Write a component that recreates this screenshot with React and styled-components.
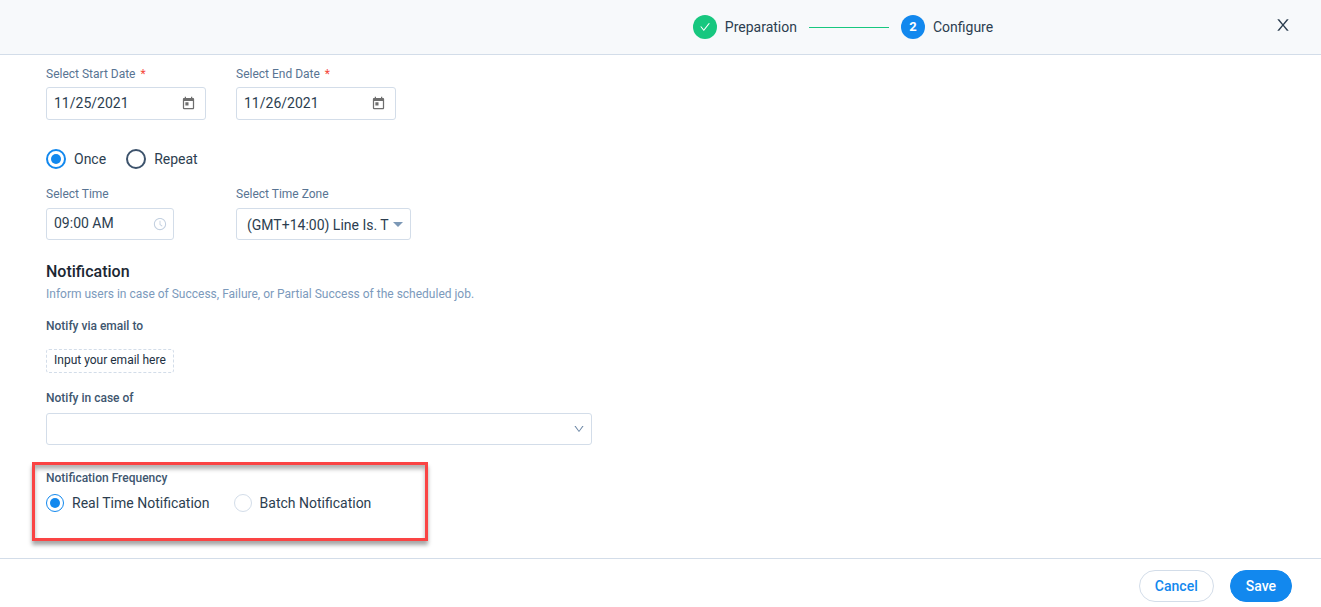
import { useState } from "react";
import styled, { createGlobalStyle } from "styled-components";
import {
  AiOutlineCheck,
  AiOutlineClockCircle,
  AiOutlineDown,
} from "react-icons/ai";
import { MdToday } from "react-icons/md";

const GlobalStyle = createGlobalStyle`
  * {
    box-sizing: border-box;
  }

  body {
    margin: 0;
    background: #ffffff;
    color: #2c3e50;
    font-family: Roboto, "Liberation Sans", sans-serif;
    font-size: 14px;
    line-height: 20px;
  }

  input, select, button {
    font: inherit;
    color: inherit;
  }
`;

const Page = styled.div`
  display: flex;
  flex-direction: column;
  min-height: 100vh;
`;

const Header = styled.header`
  display: flex;
  align-items: center;
  padding: 11px 22px 11px 419px;
  background: #f7f9fb;
  border-bottom: 1px solid #d3dde9;
`;

const Steps = styled.ol`
  flex: 1;
  display: flex;
  justify-content: center;
  align-items: center;
  gap: 12px;
  margin: 0;
  padding: 0;
  list-style: none;
`;

const Step = styled.li`
  display: flex;
  align-items: center;
  gap: 8px;

  & + &::before {
    content: "";
    width: 80px;
    height: 1px;
    margin-right: 4px;
    background: #17c77f;
  }
`;

const StepBadge = styled.span`
  display: flex;
  align-items: center;
  justify-content: center;
  width: 24px;
  height: 24px;
  border-radius: 50%;
  background: ${(props) => (props.$done ? "#17c77f" : "#1288ee")};
  color: white;
  font-size: 13px;
  font-weight: 700;
`;

const CloseButton = styled.button`
  display: flex;
  align-items: center;
  justify-content: center;
  width: 32px;
  height: 28px;
  margin-bottom: 4px;
  padding: 0;
  border: none;
  background: none;
`;

const Content = styled.main`
  flex: 1;
  padding: 11px 46px 17px;
`;

const FieldRow = styled.div`
  display: grid;
  grid-template-columns: 160px 175px;
  column-gap: 30px;
`;

const Label = styled.label`
  display: block;
  margin-bottom: ${(props) => props.$gap || "6px"};
  font-size: 12px;
  line-height: 16px;
  font-weight: ${(props) => (props.$strong ? 500 : 400)};
  color: ${(props) => (props.$strong ? "#40566f" : "#587493")};
`;

const Required = styled.span`
  margin-left: 2px;
  color: #f5483b;
`;

const Control = styled.div`
  position: relative;
  max-width: ${(props) => props.$width || "100%"};
`;

const ControlIcon = styled.span`
  position: absolute;
  top: 0;
  bottom: 0;
  right: ${(props) => props.$right || "7px"};
  display: flex;
  align-items: center;
  color: ${(props) => props.$color || "#6b86a5"};
  font-size: ${(props) => props.$size || "14px"};
  pointer-events: none;
`;

const TextInput = styled.input`
  display: block;
  width: 100%;
  height: 32px;
  padding: 0 28px 2px 7px;
  border: 1px solid #d3dde9;
  border-radius: 3px;
  background: white;
`;

const DateInput = styled(TextInput)`
  height: 33px;
`;

const Select = styled.select`
  display: block;
  width: 100%;
  height: 32px;
  padding: 1px 20px 0 10px;
  border: 1px solid #d3dde9;
  border-radius: 3px;
  background: white;
  appearance: none;
`;

const EmailInput = styled.input`
  display: block;
  width: 128px;
  height: 24px;
  margin: 15px 0 17px;
  padding: 0 7px 2px;
  border: 1px dashed #d3dde9;
  border-radius: 3px;
  font-size: 12px;

  &::placeholder {
    color: #22303f;
    opacity: 1;
  }
`;

const RadioGroup = styled.div`
  display: flex;
  gap: ${(props) => props.$gap};
  margin: ${(props) => props.$margin};
`;

const RadioLabel = styled.label`
  display: flex;
  align-items: center;
  gap: 8px;
`;

const Radio = styled.input`
  display: grid;
  place-content: center;
  width: 20px;
  height: 20px;
  margin: 0;
  border: 2px solid #3d536c;
  border-radius: 50%;
  background: white;
  appearance: none;

  &:checked {
    border-color: #1288ee;
  }

  &:checked::before {
    content: "";
    width: 10px;
    height: 10px;
    border-radius: 50%;
    background: #1288ee;
  }
`;

const SmallRadio = styled(Radio)`
  width: 18px;
  height: 18px;
  border: 1px solid #d3dde9;
`;

const SectionTitle = styled.h2`
  margin: 22px 0 4px;
  color: #1b2733;
  font-size: 16px;
  font-weight: 500;
  line-height: 20px;
`;

const Hint = styled.p`
  margin: 0 0 16px;
  color: #7c9abc;
  font-size: 12px;
  line-height: 16px;
`;

const Highlight = styled.section`
  max-width: 396px;
  margin: 17px 0 0 -14px;
  padding: 5px 11px 25px;
  border: 3px solid #fa4444;
  box-shadow: 0 4px 4px rgba(0, 0, 0, 0.35), inset 0 4px 4px rgba(0, 0, 0, 0.3);
`;

const GroupTitle = styled.h3`
  margin: 0 0 7px;
  color: #40566f;
  font-size: 12px;
  font-weight: 500;
  line-height: 16px;
`;

const Footer = styled.footer`
  display: flex;
  justify-content: flex-end;
  gap: 16px;
  padding: 11px 29px 5px;
  border-top: 1px solid #d3dde9;
`;

const Button = styled.button`
  height: 32px;
  padding: 0 15px;
  border: 1px solid ${(props) => (props.$primary ? "#1288ee" : "#d3dde9")};
  border-radius: 16px;
  background: ${(props) => (props.$primary ? "#1288ee" : "white")};
  color: ${(props) => (props.$primary ? "white" : "#1288ee")};
  font-weight: 500;
`;

function CloseIcon() {
  return (
    <svg width="18" height="18" viewBox="0 0 1024 1024" fill="currentColor">
      <path d="M563.8 512l262.5-312.9c4.4-5.2.7-13.1-6.1-13.1h-79.8c-4.7 0-9.2 2.1-12.3 5.7L511.6 449.8 295.1 191.7c-3-3.6-7.5-5.7-12.3-5.7H203c-6.8 0-10.5 7.9-6.1 13.1L459.4 512 196.9 824.9A7.95 7.95 0 0 0 203 838h79.8c4.7 0 9.2-2.1 12.3-5.7l216.5-258.1 216.5 258.1c3 3.6 7.5 5.7 12.3 5.7h79.8c6.8 0 10.5-7.9 6.1-13.1L563.8 512z" />
    </svg>
  );
}

function DateField({ id, label, value }) {
  return (
    <div>
      <Label htmlFor={id} $gap="5px">
        {label} <Required>*</Required>
      </Label>
      <Control $width="160px">
        <DateInput id={id} defaultValue={value} />
        <ControlIcon $right="10px" $color="#6e6e6e" $size="15px">
          <MdToday />
        </ControlIcon>
      </Control>
    </div>
  );
}

export default function App() {
  const [schedule, setSchedule] = useState("once");
  const [frequency, setFrequency] = useState("realtime");

  return (
    <Page>
      <GlobalStyle />
      <Header>
        <Steps>
          <Step>
            <StepBadge $done>
              <AiOutlineCheck size={12} />
            </StepBadge>
            Preparation
          </Step>
          <Step>
            <StepBadge>2</StepBadge>
            Configure
          </Step>
        </Steps>
        <CloseButton type="button" aria-label="Close">
          <CloseIcon />
        </CloseButton>
      </Header>

      <Content>
        <FieldRow>
          <DateField id="start-date" label="Select Start Date" value="11/25/2021" />
          <DateField id="end-date" label="Select End Date" value="11/26/2021" />
        </FieldRow>

        <RadioGroup $gap="20px" $margin="29px 0 17px">
          <RadioLabel>
            <Radio
              type="radio"
              name="schedule"
              checked={schedule === "once"}
              onChange={() => setSchedule("once")}
            />
            Once
          </RadioLabel>
          <RadioLabel>
            <Radio
              type="radio"
              name="schedule"
              checked={schedule === "repeat"}
              onChange={() => setSchedule("repeat")}
            />
            Repeat
          </RadioLabel>
        </RadioGroup>

        <FieldRow>
          <div>
            <Label htmlFor="time">Select Time</Label>
            <Control $width="128px">
              <TextInput id="time" defaultValue="09:00 AM" />
              <ControlIcon $color="#c3d0e0">
                <AiOutlineClockCircle />
              </ControlIcon>
            </Control>
          </div>
          <div>
            <Label htmlFor="timezone">Select Time Zone</Label>
            <Control>
              <Select id="timezone">
                <option>(GMT+14:00) Line Is. T</option>
              </Select>
              <ControlIcon $right="8px">
                <svg width="10" height="5" viewBox="0 0 10 5">
                  <path d="M0 0h10L5 5z" fill="#7c98b6" />
                </svg>
              </ControlIcon>
            </Control>
          </div>
        </FieldRow>

        <SectionTitle>Notification</SectionTitle>
        <Hint>
          Inform users in case of Success, Failure, or Partial Success of the
          scheduled job.
        </Hint>

        <Label $strong htmlFor="email">
          Notify via email to
        </Label>
        <EmailInput id="email" type="email" placeholder="Input your email here" />

        <Label $strong $gap="7px" htmlFor="notify-case">
          Notify in case of
        </Label>
        <Control $width="546px">
          <Select id="notify-case" defaultValue="">
            <option value=""></option>
            <option>Success</option>
            <option>Failure</option>
            <option>Partial Success</option>
          </Select>
          <ControlIcon $size="12px">
            <AiOutlineDown />
          </ControlIcon>
        </Control>

        <Highlight>
          <GroupTitle id="frequency-title">Notification Frequency</GroupTitle>
          <RadioGroup
            role="radiogroup"
            aria-labelledby="frequency-title"
            $gap="24px"
            $margin="0"
          >
            <RadioLabel>
              <SmallRadio
                type="radio"
                name="frequency"
                checked={frequency === "realtime"}
                onChange={() => setFrequency("realtime")}
              />
              Real Time Notification
            </RadioLabel>
            <RadioLabel>
              <SmallRadio
                type="radio"
                name="frequency"
                checked={frequency === "batch"}
                onChange={() => setFrequency("batch")}
              />
              Batch Notification
            </RadioLabel>
          </RadioGroup>
        </Highlight>
      </Content>

      <Footer>
        <Button type="button">Cancel</Button>
        <Button type="button" $primary>
          Save
        </Button>
      </Footer>
    </Page>
  );
}
